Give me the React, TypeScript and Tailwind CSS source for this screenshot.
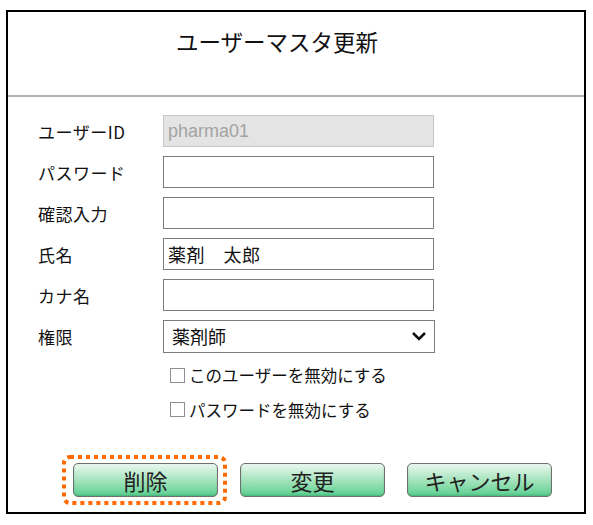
import { useState } from "react";

const font = { fontFamily: '"Noto Sans CJK JP", "Noto Sans", sans-serif' };

type Row = {
  label: string;
  value?: string;
  disabled?: boolean;
};

const rows: Row[] = [
  { label: "ユーザーID", value: "pharma01", disabled: true },
  { label: "パスワード" },
  { label: "確認入力" },
  { label: "氏名", value: "薬剤　太郎" },
  { label: "カナ名" },
];

const Field = ({ label, value, disabled }: Row) => (
  <div className="flex items-center">
    <div className="w-[125px] text-[17px] tracking-[0.5px] text-[#111] leading-none">{label}</div>
    {disabled ? (
      <input
        type="text"
        readOnly
        value={value ?? ""}
        className="w-[271px] h-[32px] px-[4px] text-[18px] text-[#a3a3a3] bg-[#e4e4e4] border border-[#c6c6c6] outline-none"
        style={{ fontFamily: '"Liberation Sans", Arial, sans-serif' }}
      />
    ) : (
      <input
        type="text"
        defaultValue={value ?? ""}
        className="w-[271px] h-[32px] px-[4px] text-[18px] tracking-[0.5px] text-[#111] bg-white border border-[#7c7c7c] outline-none"
        style={font}
      />
    )}
  </div>
);

const Check = ({ text }: { text: string }) => {
  const [on, setOn] = useState(false);
  return (
    <label className="flex items-center gap-[4px] text-[16.5px] text-[#111] leading-none cursor-pointer">
      <input
        type="checkbox"
        checked={on}
        onChange={() => setOn(!on)}
        className="appearance-none shrink-0 m-0 w-[15px] h-[15px] border border-[#8f8f8f] bg-white checked:bg-[#3b82f6]"
      />
      {text}
    </label>
  );
};

const Button = ({ text, focus }: { text: string; focus?: boolean }) => (
  <div className="relative">
    <button
      className="w-[145px] h-[34px] rounded-[5px] border border-[#6f6f6f] bg-gradient-to-b from-[#e9f8ef] to-[#55cf8e] text-[22px] text-[#222] leading-none shadow-[inset_0_-1px_2px_rgba(0,0,0,0.15)] outline-none"
      style={font}
    >
      {text}
    </button>
    {focus && (
      <svg
        className="absolute left-[-11px] top-[-8px] pointer-events-none"
        width="165"
        height="50"
        viewBox="0 0 165 50"
      >
        <rect
          x="2"
          y="2"
          width="161"
          height="46"
          rx="6"
          fill="none"
          stroke="#ff6a00"
          strokeWidth="4"
          strokeDasharray="4 4"
        />
      </svg>
    )}
  </div>
);

export default function App() {
  return (
    <div className="bg-white w-[593px] h-[525px] pt-[10px] pl-[6px]" style={font}>
      <div className="w-[580px] h-[504px] border-2 border-black flex flex-col">
        <div className="h-[83px] pt-[14px] pl-[168px] text-[22.5px] leading-[30px] text-[#111]">
          ユーザーマスタ更新
        </div>
        <div className="h-[2px] bg-[#b4b4b4]" />
        <div className="flex flex-col gap-[9px] pt-[18px] pl-[30px]">
          {rows.map((r) => (
            <Field key={r.label} {...r} />
          ))}
          <div className="flex items-center">
            <div className="w-[125px] text-[17px] tracking-[0.5px] text-[#111] leading-none">権限</div>
            <div className="relative">
              <select
                defaultValue="薬剤師"
                className="appearance-none w-[272px] h-[33px] px-[8px] text-[18px] text-[#111] bg-white border border-[#7c7c7c] outline-none"
                style={font}
              >
                <option>薬剤師</option>
                <option>管理者</option>
                <option>事務</option>
              </select>
              <svg
                className="absolute right-[8px] top-[10px] pointer-events-none"
                width="16"
                height="12"
                viewBox="0 0 16 12"
              >
                <path d="M2 3 L8 9 L14 3" fill="none" stroke="#111" strokeWidth="2.6" />
              </svg>
            </div>
          </div>
        </div>
        <div className="flex flex-col gap-[18px] pl-[162px] pt-[14px]">
          <Check text="このユーザーを無効にする" />
          <Check text="パスワードを無効にする" />
        </div>
        <div className="flex gap-[22px] pl-[65px] pt-[45px]">
          <Button text="削除" focus />
          <Button text="変更" />
          <Button text="キャンセル" />
        </div>
      </div>
    </div>
  );
}
